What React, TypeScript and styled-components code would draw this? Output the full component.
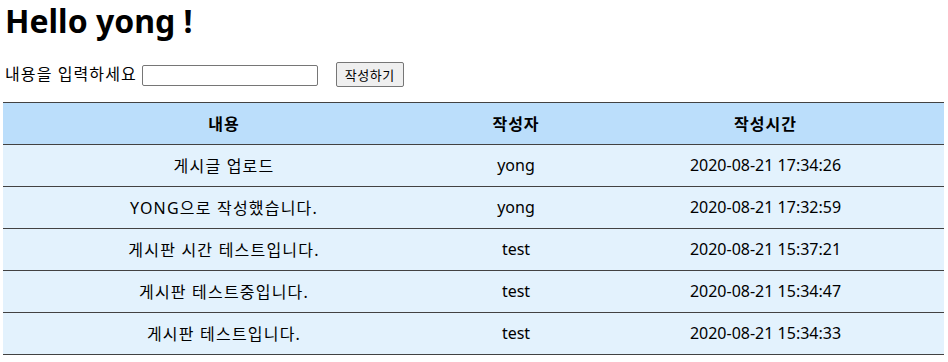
import React from "react";
import styled, { createGlobalStyle } from "styled-components";

const Global = createGlobalStyle`
  html, body { margin: 0; padding: 0; background: #fff; }
  body { font-family: "Noto Sans", "Noto Sans CJK KR", sans-serif; color: #000; }
`;

const Page = styled.div`
  padding: 0 4px 0 3px;
`;

const Title = styled.h1`
  margin: 0;
  padding: 0 0 0 2px;
  font-size: 32px;
  font-weight: 700;
  line-height: 42px;
`;

const Form = styled.form`
  display: flex;
  align-items: center;
  margin: 20px 0 15px;
  padding-left: 2px;
  font-size: 16px;
  line-height: 25px;
`;

const Label = styled.label`
  margin-right: 5px;
  letter-spacing: 1.1px;
`;

const Input = styled.input`
  width: 176px;
  height: 21px;
  box-sizing: border-box;
  border: 1px solid #767676;
  border-radius: 2px;
  padding: 1px 2px;
  margin: 1px 18px 0 0;
`;

const Button = styled.button`
  height: 25px;
  box-sizing: border-box;
  padding: 0 8px;
  border: 1px solid #767676;
  border-radius: 2px;
  background: #efefef;
  font-family: "Noto Sans CJK KR", sans-serif;
  font-size: 13px;
  letter-spacing: 0.5px;
  color: #000;
`;

const Table = styled.table`
  width: 941px;
  border-collapse: collapse;
  font-size: 16px;
`;

const HeadCell = styled.th<{ $w: number }>`
  width: ${(p) => p.$w}px;
  height: 42px;
  box-sizing: border-box;
  padding: 0 0 1px;
  background: #bbdefb;
  border-top: 1px solid #424242;
  border-bottom: 1px solid #424242;
  font-weight: 700;
  letter-spacing: 1px;
  text-align: center;
`;

const Cell = styled.td<{ $ko?: boolean }>`
  height: 42px;
  box-sizing: border-box;
  padding: 0 0 2px;
  background: #e3f2fd;
  border-bottom: 1px solid #424242;
  text-align: center;
  letter-spacing: ${(p) => (p.$ko ? "1.2px" : "0")};
`;

const rows = [
  ["게시글 업로드", "yong", "2020-08-21 17:34:26"],
  ["YONG으로 작성했습니다.", "yong", "2020-08-21 17:32:59"],
  ["게시판 시간 테스트입니다.", "test", "2020-08-21 15:37:21"],
  ["게시판 테스트중입니다.", "test", "2020-08-21 15:34:47"],
  ["게시판 테스트입니다.", "test", "2020-08-21 15:34:33"],
];

export default function App() {
  return (
    <>
      <Global />
      <Page>
        <Title>Hello yong !</Title>
        <Form onSubmit={(e) => e.preventDefault()}>
          <Label>내용을 입력하세요</Label>
          <Input type="text" />
          <Button type="submit">작성하기</Button>
        </Form>
        <Table>
          <thead>
            <tr>
              <HeadCell $w={442}>내용</HeadCell>
              <HeadCell $w={142}>작성자</HeadCell>
              <HeadCell $w={357}>작성시간</HeadCell>
            </tr>
          </thead>
          <tbody>
            {rows.map((r, i) => (
              <tr key={i}>
                {r.map((c, j) => (
                  <Cell key={j} $ko={j === 0}>
                    {c}
                  </Cell>
                ))}
              </tr>
            ))}
          </tbody>
        </Table>
      </Page>
    </>
  );
}
